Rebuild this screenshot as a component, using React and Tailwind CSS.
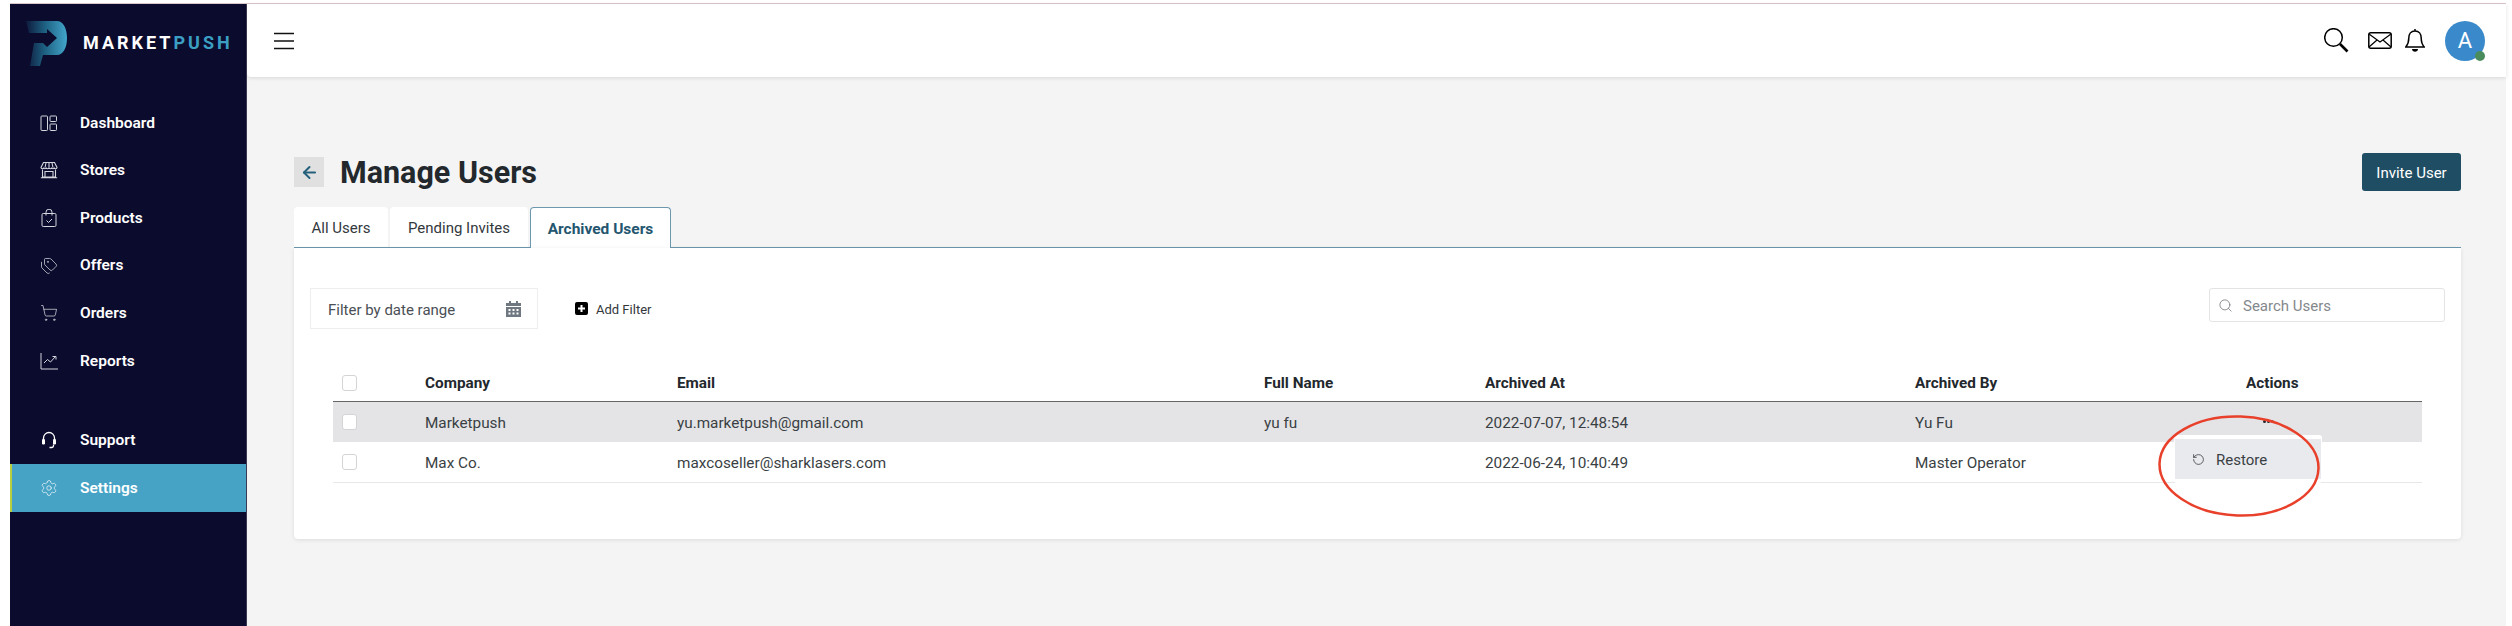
import React from "react";
import { Settings, ShoppingCart, Tags, ArrowLeft, RotateCcw, Search } from "lucide-react";

const thin = { strokeWidth: 1, fill: "none", stroke: "currentColor" };

function DashIcon() {
  return (
    <svg width="18" height="18" viewBox="0 0 18 18" {...thin}>
      <rect x="1" y="2" width="6.500" height="14.500" rx="0.8" />
      <rect x="10" y="2" width="6.500" height="5.500" rx="0.8" />
      <rect x="10" y="10" width="6.500" height="6.500" rx="0.8" />
    </svg>
  );
}
function StoreIcon() {
  return (
    <svg width="18" height="18" viewBox="0 0 18 18" fill="none" stroke="currentColor" strokeWidth="1.100">
      <path d="M3.500 1.500h11L17 6.500c0 1.600-2.800 1.600-2.700 0 0 1.600-2.700 1.600-2.700 0 0 1.600-2.600 1.600-2.600 0 0 1.600-2.700 1.600-2.700 0 0 1.600-2.600 1.600-2.600 0 0 1.600-2.700 1.600-2.700 0z" />
      <path d="M2.500 8.500V16h13V8.500M5 16v-5.500h8V16M.8 16.800h16.400M6 2l-1 4.500M9 2v4.500M12 2l1 4.500" />
    </svg>
  );
}
function BagIcon() {
  return (
    <svg width="18" height="18" viewBox="0 0 18 18" {...thin}>
      <rect x="2" y="4.500" width="14" height="13" rx="1.200" />
      <path d="M6 6.500V3.200a3 3 0 0 1 6 0v3.300M6.500 11.500l2 2 3.500-3.500" />
    </svg>
  );
}
function ReportIcon() {
  return (
    <svg width="18" height="18" viewBox="0 0 18 18" {...thin}>
      <path d="M1 1v16h17M4 11l3.500-3.500 3 2.500 5-5.500M12.500 4.500h3.500v3" />
    </svg>
  );
}
function SupportIcon() {
  return (
    <svg width="18" height="18" viewBox="0 0 18 18" fill="none" stroke="#fff" strokeWidth="1.300">
      <path d="M3.500 9.500V7a5.500 5.500 0 0 1 11 0v2.500M13.500 13.500v1.300c0 1-.7 1.700-1.700 1.700H9.500" />
      <rect x="2" y="8" width="3" height="5.500" rx="1.300" fill="#fff" stroke="none" />
      <rect x="13" y="8" width="3" height="5.500" rx="1.300" fill="#fff" stroke="none" />
    </svg>
  );
}

const nav = [
  ["Dashboard", <DashIcon />],
  ["Stores", <StoreIcon />],
  ["Products", <BagIcon />],
  ["Offers", <Tags size={18} strokeWidth={1} />],
  ["Orders", <ShoppingCart size={18} strokeWidth={1} />],
  ["Reports", <ReportIcon />],
];

function NavItem({ label, icon, active }) {
  return (
    <div className={`flex h-[47.600px] items-center text-[15.500px] font-semibold text-white ${active ? "border-l-2 border-[#b9cf3f] bg-[#47a3c5] pl-[28px]" : "pl-[30px]"}`}>
      <span className={`flex w-[40px] ${active ? "text-[#eef6fa]" : "text-[#d5d6de]"}`}>{icon}</span>
      <span className="pt-[1px]">{label}</span>
    </div>
  );
}

function Check() {
  return <span className="block h-[16px] w-[15px] rounded-[3px] border border-[#d4d4d6] bg-white" />;
}

const grid = "grid grid-cols-[92px_252px_587px_221px_430px_331px_176px] items-center";

function Row({ cells, className }) {
  return (
    <div className={`${grid} ${className}`}>
      <span className="pl-[9px]"><Check /></span>
      {cells.map((c, i) => (
        <span key={i} className="pt-[2px]">{c}</span>
      ))}
      <span />
    </div>
  );
}

export default function App() {
  return (
    <div className="h-[626px] w-full overflow-hidden bg-white pr-[6px] pl-[10px]" style={{ fontFamily: "Roboto, sans-serif" }}>
      <div className="mt-[3px] h-[1px] bg-[#d8c8cc]" />
      <div className="flex h-[622px]">
        <aside className="w-[237px] shrink-0 border-r border-[#3a3a55] bg-[#0b0b2d]">
          <div className="flex h-[95px] items-start pt-[16px] pl-[16px]">
            <svg width="44" height="50" viewBox="0 0 44 50" className="shrink-0">
              <defs>
                <linearGradient id="lg" x1="0" x2="1" y1="0.5" y2="0.5">
                  <stop offset="0" stopColor="#0e1a3c" />
                  <stop offset="0.45" stopColor="#1d5f80" />
                  <stop offset="1" stopColor="#42a6cb" />
                </linearGradient>
              </defs>
              <path fill="url(#lg)" d="M0 1H31C37 1 41 8 41 18C41 28 37 35 31 35H17L14 46H4L8 23H17L21 27L31 18L21 9V13H3Z" />
            </svg>
            <div className="mt-[12px] ml-[13px] text-[18px] leading-[22px] font-bold tracking-[3px] whitespace-nowrap text-white">
              MARKET<span className="text-[#3b9fc4]">PUSH</span>
            </div>
          </div>
          {nav.map(([l, i]) => (
            <NavItem key={l} label={l} icon={i} />
          ))}
          <div className="h-[32px]" />
          <NavItem label="Support" icon={<SupportIcon />} />
          <NavItem label="Settings" icon={<Settings size={18} strokeWidth={1} />} active />
        </aside>

        <div className="min-w-0 flex-1 bg-[#f4f4f4]">
          <header className="flex h-[73px] items-center justify-between rounded-bl-[4px] bg-white pr-[21px] pl-[27px] shadow-[0_1px_4px_rgba(0,0,0,0.12)]">
            <svg width="20" height="18" viewBox="0 0 20 18" stroke="#111" strokeWidth="1.300">
              <path d="M0 1.500h20M0 9h20M0 16.500h20" />
            </svg>
            <div className="flex items-center">
              <svg width="25" height="25" viewBox="0 0 25 25" fill="none" stroke="#000">
                <circle cx="9.500" cy="9.500" r="8.800" strokeWidth="1.500" />
                <path d="M16 16l7.500 7.500" strokeWidth="2.600" />
              </svg>
              <svg width="24" height="17" viewBox="0 0 24 17" fill="none" stroke="#000" strokeWidth="1.500" className="ml-[19px]">
                <rect x="0.800" y="0.800" width="22.400" height="15.400" rx="2" />
                <path d="M1 2l11 8 11-8M1 15l8-7M23 15l-8-7" strokeWidth="1.200" />
              </svg>
              <svg width="20" height="25" viewBox="0 0 20 25" fill="none" stroke="#000" strokeWidth="1.500" className="ml-[13px]">
                <path d="M10 3c-4 0-6.200 3-6.200 7 0 5-1.300 7-3 9h18.400c-1.700-2-3-4-3-9 0-4-2.200-7-6.200-7zM10 3V1" />
                <path d="M7 21h6c0 3.500-6 3.500-6 0z" fill="#000" stroke="none" />
              </svg>
              <div className="relative ml-[20px] flex h-[40px] w-[40px] items-center justify-center rounded-full bg-[#3a8acb] text-[22px] text-white">
                A
                <span className="absolute right-0 bottom-0 h-[10px] w-[10px] rounded-full bg-[#4a8c5c]" />
              </div>
            </div>
          </header>

          <main className="pt-[76px] pr-[45px] pl-[47px]">
            <div className="flex items-center justify-between">
              <div className="flex items-center">
                <span className="flex h-[30px] w-[30px] items-center justify-center bg-[#e0e0e0] text-[#24607c]">
                  <ArrowLeft size={19} strokeWidth={2.500} />
                </span>
                <h1 className="ml-[16px] pt-[2px] text-[30.500px] leading-[36px] font-bold text-[#23282d]">Manage Users</h1>
              </div>
              <button className="h-[38px] w-[99px] rounded-[3px] bg-[#1f4e64] pt-[2px] text-[15px] text-white">Invite User</button>
            </div>

            <div className="mt-[16px] flex h-[41px] items-end border-b border-[#6c97ad] text-[15px] text-[#33383d]">
              <div className="flex h-[40px] w-[94px] items-center justify-center rounded-t-[4px] bg-white pt-[3px]">All Users</div>
              <div className="ml-[2px] flex h-[40px] w-[138px] items-center justify-center rounded-t-[4px] bg-white pt-[3px]">Pending Invites</div>
              <div className="relative top-[1px] ml-[2px] flex h-[41px] w-[141px] items-center justify-center rounded-t-[4px] border border-b-0 border-[#6c97ad] bg-white pt-[3px] text-[15.500px] font-bold text-[#24566f]">Archived Users</div>
            </div>

            <section className="relative h-[291px] rounded-b-[4px] bg-white shadow-[0_1px_4px_rgba(0,0,0,0.1)]">
              <div className="flex items-start justify-between pt-[40px] pr-[16px] pl-[16px]">
                <div className="flex items-center">
                  <div className="flex h-[41px] w-[228px] items-center justify-between border border-[#eeeeee] pr-[16px] pl-[17px] text-[15px] text-[#4a4f55]">
                    <span className="pt-[3px]">Filter by date range</span>
                    <svg width="15" height="16" viewBox="0 0 15 16" fill="#6f7780">
                      <path d="M3 0h2v2h5V0h2v2h3v3H0V2h3zM0 6h15v10H0zm2.500 2v2h2V8zm4 0v2h2V8zm4 0v2h2V8zm-8 3.500v2h2v-2zm4 0v2h2v-2zm4 0v2h2v-2z" fillRule="evenodd" />
                    </svg>
                  </div>
                  <div className="ml-[37px] flex items-center text-[13px] text-[#33383d]">
                    <svg width="13" height="13" viewBox="0 0 13 13" className="mr-[8px]">
                      <rect width="13" height="13" rx="2" fill="#000" />
                      <path d="M6.500 3v7M3 6.500h7" stroke="#fff" strokeWidth="2" />
                    </svg>
                    <span className="pt-[2px]">Add Filter</span>
                  </div>
                </div>
                <div className="flex h-[34px] w-[236px] items-center rounded-[3px] border border-[#e4e4e4] pl-[8px] text-[15px] text-[#84888c]">
                  <Search size={15} strokeWidth={1.500} className="mr-[10px]" />
                  <span className="pt-[3px]">Search Users</span>
                </div>
              </div>

              <div className="mt-[35px] mr-[39px] ml-[39px] text-[15.300px] text-[#3a3f44]">
                <div className={`${grid} h-[38px] border-b border-[#666] font-bold text-[#23282d]`}>
                  <span className="pl-[9px]"><Check /></span>
                  <span className="pt-[1px]">Company</span>
                  <span className="pt-[1px]">Email</span>
                  <span className="pt-[1px]">Full Name</span>
                  <span className="pt-[1px]">Archived At</span>
                  <span className="pt-[1px]">Archived By</span>
                  <span className="pt-[1px]">Actions</span>
                </div>
                <Row className="h-[40px] bg-[#e4e4e6]" cells={["Marketpush", "yu.marketpush@gmail.com", "yu fu", "2022-07-07, 12:48:54", "Yu Fu"]} />
                <Row className="h-[41px] border-b border-[#e8e8e8]" cells={["Max Co.", "maxcoseller@sharklasers.com", "", "2022-06-24, 10:40:49", "Master Operator"]} />
              </div>

              <div className="absolute top-[172px] left-[1969px] flex gap-[1px]">
                <span className="h-[3px] w-[3px] rounded-full bg-[#23282d]" />
                <span className="h-[3px] w-[3px] rounded-full bg-[#23282d]" />
                <span className="h-[3px] w-[3px] rounded-full bg-[#6b6f73]" />
              </div>
              <div className="absolute top-[187px] left-[1880px] h-[48px] w-[148px] rounded-[3px] bg-white px-[1px] pt-[4px]">
                <div className="flex h-[40px] items-center bg-[#e9eaee] pl-[17px] text-[15px] text-[#3a3f44]">
                  <RotateCcw size={13} strokeWidth={1.500} className="mr-[11px]" />
                  <span className="pt-[2px]">Restore</span>
                </div>
              </div>
              <svg className="absolute top-[166px] left-[1863px]" width="164" height="104" viewBox="0 0 164 104" fill="none">
                <ellipse cx="82" cy="52" rx="79.500" ry="49.500" stroke="#e8402a" strokeWidth="2.500" transform="rotate(2 82 52)" />
              </svg>
            </section>
          </main>
        </div>
      </div>
    </div>
  );
}
